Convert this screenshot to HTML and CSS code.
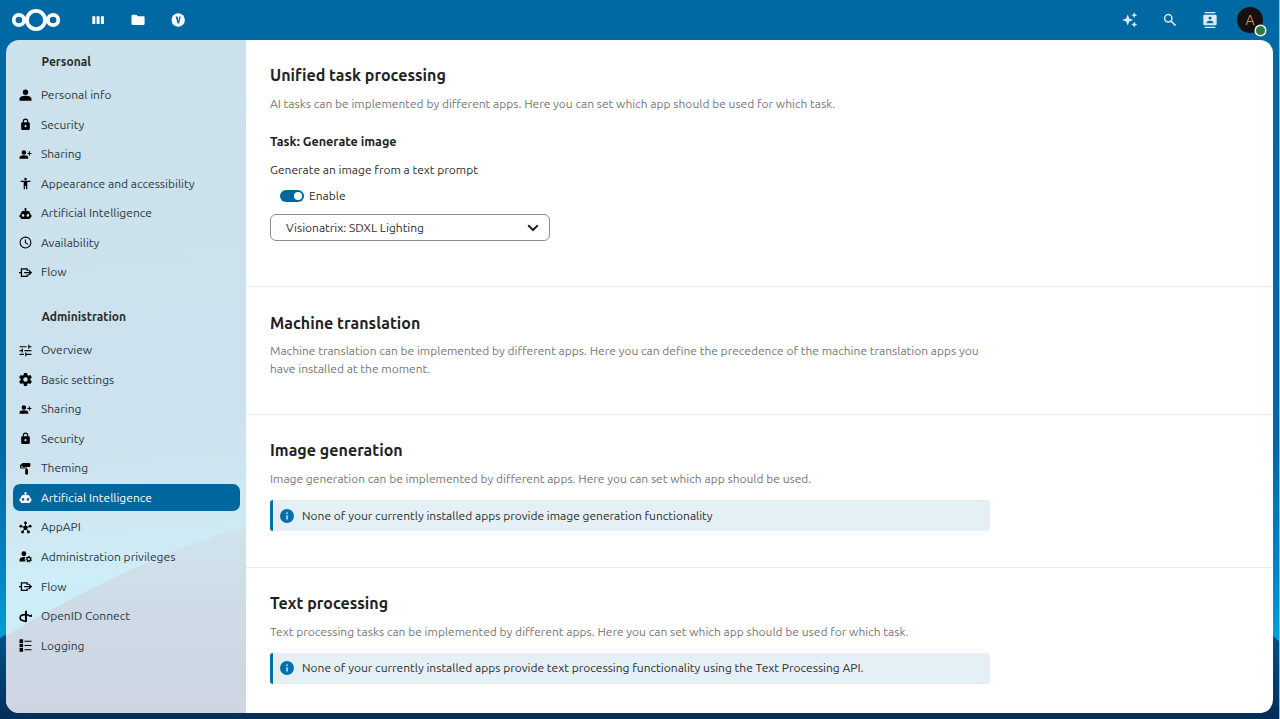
FILE: index.html
```html
<!DOCTYPE html>
<html lang="en">
<head>
<meta charset="utf-8">
<title>Artificial Intelligence - Administration settings</title>
<link rel="stylesheet" href="styles.css">
</head>
<body>
<svg class="defs" aria-hidden="true">
  <symbol id="i-user" viewBox="0 0 24 24"><path d="M12 1a5 5 0 0 1 0 10 5 5 0 0 1 0-10M12 12.500c6.500 0 11 2 11 5.500v3.500H1V18c0-3.500 4.500-5.500 11-5.500z"/></symbol>
  <symbol id="i-lock" viewBox="0 0 24 24"><path d="M12,17A2,2 0 0,0 14,15C14,13.89 13.1,13 12,13A2,2 0 0,0 10,15A2,2 0 0,0 12,17M18,8A2,2 0 0,1 20,10V20A2,2 0 0,1 18,22H6A2,2 0 0,1 4,20V10C4,8.89 4.9,8 6,8H7V6A5,5 0 0,1 12,1A5,5 0 0,1 17,6V8H18M12,3A3,3 0 0,0 9,6V8H15V6A3,3 0 0,0 12,3Z"/></symbol>
  <symbol id="i-share" viewBox="0 0 24 24"><path d="M9 4a4 4 0 0 1 0 8.500 4 4 0 0 1 0-8.500M9 13.500c5 0 8 1.500 8 4V20H1v-2.500c0-2.500 3-4 8-4zM18.200 6h2v3H23v2h-2.800v3h-2v-3h-2.800V9h2.800z"/></symbol>
  <symbol id="i-access" viewBox="0 0 24 24"><path d="M12 1.500a2.200 2.200 0 0 1 0 4.400A2.200 2.200 0 0 1 12 1.500M21 9.200h-5.700V22.500h-2.300v-6h-2v6H8.700V9.200H3V6.700h18z"/></symbol>
  <symbol id="i-robot" viewBox="0 0 24 24"><path d="M12,2A2,2 0 0,1 14,4C14,4.740 13.600,5.390 13,5.730V7H14A7,7 0 0,1 21,14H22A1,1 0 0,1 23,15V18A1,1 0 0,1 22,19H21V20A2,2 0 0,1 19,22H5A2,2 0 0,1 3,20V19H2A1,1 0 0,1 1,18V15A1,1 0 0,1 2,14H3A7,7 0 0,1 10,7H11V5.730C10.400,5.390 10,4.740 10,4A2,2 0 0,1 12,2M7.500,13A2.500,2.500 0 0,0 5,15.500A2.500,2.500 0 0,0 7.500,18A2.500,2.500 0 0,0 10,15.500A2.500,2.500 0 0,0 7.500,13M16.500,13A2.500,2.500 0 0,0 14,15.500A2.500,2.500 0 0,0 16.500,18A2.500,2.500 0 0,0 19,15.500A2.500,2.500 0 0,0 16.500,13Z"/></symbol>
  <symbol id="i-clock" viewBox="0 0 24 24"><path fill="none" stroke="currentColor" stroke-width="2" d="M12 2a10 10 0 0 1 0 20 10 10 0 0 1 0-20M11.800 6.500v6l5 3"/></symbol>
  <symbol id="i-flow" viewBox="0 0 24 24"><path fill="none" stroke="currentColor" stroke-width="2.400" d="M15 9V5.200H4.500v14H15V15.500M0 12.200h4M9.500 12.200h11M17.500 7.200l5 5-5 5"/></symbol>
  <symbol id="i-tune" viewBox="0 0 24 24"><path d="M1 4h13v2.200H1zM17 1.500h2.200V4H23v2.200h-3.800v2.500H17zM1 11h4V8.500h2.200v7.200H5v-2.500H1zM10 11h13v2.200H10zM1 18h8v2.200H1zM11.500 15.500h2.200V18H23v2.200h-9.300v2.600h-2.200z"/></symbol>
  <symbol id="i-cog" viewBox="2 2 20 20"><path d="M12,15.500A3.500,3.500 0 0,1 8.500,12A3.500,3.500 0 0,1 12,8.500A3.500,3.500 0 0,1 15.500,12A3.500,3.500 0 0,1 12,15.500M19.430,12.970C19.470,12.650 19.500,12.330 19.500,12C19.500,11.670 19.470,11.340 19.430,11L21.540,9.370C21.730,9.220 21.780,8.950 21.660,8.730L19.660,5.270C19.540,5.050 19.270,4.960 19.050,5.050L16.560,6.050C16.040,5.660 15.500,5.320 14.870,5.070L14.500,2.420C14.460,2.180 14.250,2 14,2H10C9.750,2 9.540,2.180 9.500,2.420L9.130,5.070C8.500,5.320 7.960,5.660 7.440,6.050L4.950,5.050C4.730,4.960 4.460,5.050 4.340,5.270L2.340,8.730C2.210,8.950 2.270,9.220 2.460,9.370L4.570,11C4.530,11.340 4.500,11.670 4.500,12C4.500,12.330 4.530,12.650 4.570,12.970L2.460,14.630C2.270,14.780 2.210,15.050 2.340,15.270L4.340,18.730C4.460,18.950 4.730,19.030 4.950,18.950L7.440,17.940C7.960,18.340 8.500,18.680 9.130,18.930L9.500,21.580C9.540,21.820 9.750,22 10,22H14C14.250,22 14.460,21.820 14.500,21.580L14.870,18.930C15.500,18.670 16.040,18.340 16.560,17.940L19.050,18.950C19.270,19.030 19.540,18.950 19.660,18.730L21.660,15.270C21.780,15.050 21.730,14.780 21.540,14.630L19.430,12.970Z"/></symbol>
  <symbol id="i-theme" viewBox="0 0 24 24"><path d="M7 2h12a2 2 0 0 1 2 2v3a2 2 0 0 1-2 2H7a2 2 0 0 1-2-2H4v3h9a2 2 0 0 1 2 2v1.500h1.500V23h-5v-9.500H13V12H4a2 2 0 0 1-2-2V6a2 2 0 0 1 2-2h1a2 2 0 0 1 2-2z"/></symbol>
  <symbol id="i-hub" viewBox="0 0 24 24"><path fill="none" stroke="currentColor" stroke-width="1.800" d="M12 4v8M3 9.500l9 3 9-3M6.500 20l5.500-7 5.500 7"/><circle cx="12" cy="12.500" r="4"/><circle cx="12" cy="3.500" r="2.600"/><circle cx="3.400" cy="9.500" r="2.600"/><circle cx="20.600" cy="9.500" r="2.600"/><circle cx="6.500" cy="20.200" r="2.700"/><circle cx="17.500" cy="20.200" r="2.700"/></symbol>
  <symbol id="i-admin" viewBox="0 0 24 24"><path d="M9 2.500a4.500 4.500 0 0 1 0 9 4.500 4.500 0 0 1 0-9M1 21v-3c0-3 4-5 8-5l3 .300c-2 2-2 5 0 7.700z"/><circle cx="18" cy="17" r="3.300" fill="none" stroke="currentColor" stroke-width="2.400"/><path fill="none" stroke="currentColor" stroke-width="2" stroke-dasharray="2 2.200" d="M18 12a5 5 0 0 1 0 10 5 5 0 0 1 0-10"/></symbol>
  <symbol id="i-openid" viewBox="0 0 24 24"><path fill="none" stroke="currentColor" stroke-width="3" d="M12 8.500C5.500 8.500 2 11 2 14.500S6 20.500 12.500 20.800M12.500 8.500c4 0 6 1 8.500 3"/><path d="M11 2l3.800-1v20.500L11 23zM24 8v5l-6.500-1.500z"/></symbol>
  <symbol id="i-log" viewBox="0 0 24 24"><path d="M1 .5h6.500v6.800H1zM1 8.600h6.500v6.800H1zM1 16.700h6.500v6.800H1zM10 3.200h13V5H10zM10 11h13v1.800H10zM10 18.800h13v1.800H10z"/></symbol>
  <symbol id="i-info" viewBox="2 2 20 20"><path d="M13,9H11V7H13M13,17H11V11H13M12,2A10,10 0 0,0 2,12A10,10 0 0,0 12,22A10,10 0 0,0 22,12A10,10 0 0,0 12,2Z"/></symbol>
</svg>

<svg class="wallpaper" viewBox="0 0 1280 719" aria-hidden="true">
  <defs>
    <linearGradient id="sky" x1="0" y1="0" x2="0" y2="1"><stop offset="0" stop-color="#0068a3"/><stop offset=".62" stop-color="#0068a5"/><stop offset=".78" stop-color="#0082c5"/><stop offset=".9" stop-color="#00a2dc"/></linearGradient>
    <linearGradient id="hill" x1="0" y1="630" x2="0" y2="719" gradientUnits="userSpaceOnUse"><stop offset="0" stop-color="#005586"/><stop offset=".8" stop-color="#033563"/><stop offset="1" stop-color="#022c59"/></linearGradient>
  </defs>
  <rect width="1280" height="719" fill="url(#sky)"/>
  <path d="M0 638 Q130 555 260 522 L1100 522 Q1220 590 1280 642V719H0z" fill="url(#hill)"/>
  <rect x="1279" width="1" height="719" fill="#8cc0dc"/>
</svg>

<header class="topbar">
  <svg class="logo" viewBox="0 0 50 24"><g fill="none" stroke="#fff"><circle cx="25" cy="12" r="9.100" stroke-width="3.800"/><circle cx="7.900" cy="12" r="5.200" stroke-width="3.800"/><circle cx="42.100" cy="12" r="5.200" stroke-width="3.800"/></g></svg>
  <nav class="apps">
    <svg viewBox="0 0 14 14"><path d="M1.300 3.200h3v7.800h-3zM5.600 3.200h3v7.800h-3zM9.900 3.200h3v7.800h-3z"/></svg>
    <svg viewBox="0 0 14 14"><path d="M1.500 1.800h3.900l1.400 1.400h5.800q1 0 1 1v6.500q0 1.200-1.200 1.200H1.700q-1.200 0-1.200-1.200V3q0-1.200 1-1.200z"/></svg>
    <svg viewBox="0 0 14 14"><circle cx="7.200" cy="7" r="6.700"/><path d="M4.600 3.600h2l1 4.500.7-4.500h1.500L8.100 10.600H6.600z" fill="#0068a3"/></svg>
  </nav>
  <div class="tools">
    <svg viewBox="0 0 16 16"><path d="M5.700 2.500l1.600 3.900L11.200 8 7.300 9.600 5.700 13.500 4.100 9.600.2 8l3.900-1.600zM12.300 .300l.9 2 2 .9-2 .9-.9 2-.9-2-2-.9 2-.9zM12.300 9.600l.9 2 2 .9-2 .9-.9 2-.9-2-2-.9 2-.9z"/></svg>
    <svg viewBox="0 0 16 16"><g fill="none" stroke="currentColor" stroke-width="1.500"><circle cx="6.300" cy="6.300" r="3.700"/><path d="M9 9l4.600 4.600"/></g></svg>
    <svg viewBox="0 0 24 24"><path d="M20,0H4V2H20V0M4,24H20V22H4V24M20,4H4A2,2 0 0,0 2,6V18A2,2 0 0,0 4,20H20A2,2 0 0,0 22,18V6A2,2 0 0,0 20,4M12,6.750A2.250,2.250 0 0,1 14.250,9A2.250,2.250 0 0,1 12,11.250A2.250,2.250 0 0,1 9.750,9A2.250,2.250 0 0,1 12,6.750M17,17H7V15.500C7,13.830 10.330,13 12,13C13.670,13 17,13.830 17,15.500V17Z"/></svg>
    <div class="avatar">A<span class="status"></span></div>
  </div>
</header>

<div class="panel">
  <aside class="sidebar">
    <svg class="sidebar-bg" viewBox="0 0 240 673" preserveAspectRatio="none" aria-hidden="true">
      <defs>
        <linearGradient id="s1" x1="0" y1="0" x2="0.030" y2="1"><stop offset="0" stop-color="#cbe1eb"/><stop offset=".6" stop-color="#cce2ee"/><stop offset=".72" stop-color="#cfe8f2"/><stop offset=".82" stop-color="#cdeef8"/></linearGradient>
        <linearGradient id="s2" x1="0" y1="0" x2="0" y2="1"><stop offset="0" stop-color="#cfe4ed"/><stop offset=".45" stop-color="#cedbe6"/><stop offset="1" stop-color="#cdd5e1"/></linearGradient>
      </defs>
      <rect width="240" height="673" fill="url(#s1)"/>
      <path d="M0 596Q120 523 240 486V673H0z" fill="url(#s2)"/>
    </svg>
    <h2 class="group">Personal</h2>
    <ul class="nav">
      <li><svg><use href="#i-user"/></svg><span>Personal info</span></li>
      <li><svg><use href="#i-lock"/></svg><span>Security</span></li>
      <li><svg><use href="#i-share"/></svg><span>Sharing</span></li>
      <li><svg><use href="#i-access"/></svg><span>Appearance and accessibility</span></li>
      <li><svg><use href="#i-robot"/></svg><span>Artificial Intelligence</span></li>
      <li><svg><use href="#i-clock"/></svg><span>Availability</span></li>
      <li><svg><use href="#i-flow"/></svg><span>Flow</span></li>
    </ul>
    <h2 class="group second">Administration</h2>
    <ul class="nav">
      <li><svg><use href="#i-tune"/></svg><span>Overview</span></li>
      <li><svg><use href="#i-cog"/></svg><span>Basic settings</span></li>
      <li><svg><use href="#i-share"/></svg><span>Sharing</span></li>
      <li><svg><use href="#i-lock"/></svg><span>Security</span></li>
      <li><svg><use href="#i-theme"/></svg><span>Theming</span></li>
      <li class="active"><svg><use href="#i-robot"/></svg><span>Artificial Intelligence</span></li>
      <li><svg><use href="#i-hub"/></svg><span>AppAPI</span></li>
      <li><svg><use href="#i-admin"/></svg><span>Administration privileges</span></li>
      <li><svg><use href="#i-flow"/></svg><span>Flow</span></li>
      <li><svg><use href="#i-openid"/></svg><span>OpenID Connect</span></li>
      <li><svg><use href="#i-log"/></svg><span>Logging</span></li>
    </ul>
  </aside>
  <main class="content">
    <section class="first">
      <h2>Unified task processing</h2>
      <p class="hint">AI tasks can be implemented by different apps. Here you can set which app should be used for which task.</p>
      <h3>Task: Generate image</h3>
      <p class="task-text">Generate an image from a text prompt</p>
      <div class="switch"><span class="track"></span><span>Enable</span></div>
      <div class="select"><span>Visionatrix: SDXL Lighting</span><svg viewBox="0 0 12 8"><path d="M1.200 1.200L6 6l4.800-4.800"/></svg></div>
    </section>
    <section class="second-section">
      <h2>Machine translation</h2>
      <p class="hint">Machine translation can be implemented by different apps. Here you can define the precedence of the machine translation apps you<br>have installed at the moment.</p>
    </section>
    <section class="third">
      <h2>Image generation</h2>
      <p class="hint">Image generation can be implemented by different apps. Here you can set which app should be used.</p>
      <div class="note"><svg><use href="#i-info"/></svg><span>None of your currently installed apps provide image generation functionality</span></div>
    </section>
    <section>
      <h2>Text processing</h2>
      <p class="hint">Text processing tasks can be implemented by different apps. Here you can set which app should be used for which task.</p>
      <div class="note"><svg><use href="#i-info"/></svg><span>None of your currently installed apps provide text processing functionality using the Text Processing API.</span></div>
    </section>
  </main>
</div>
</body>
</html>
```
FILE: styles.css
```css
* { box-sizing: border-box; }
body {
  margin: 0;
  width: 1280px;
  height: 719px;
  overflow: hidden;
  background: #0068a3;
  color: #2c2c2c;
  font: 12px/18px Ubuntu, "Noto Sans", sans-serif;
}
h2, h3, p, ul { margin: 0; padding: 0; }
svg { fill: currentColor; flex: none; }
.defs { position: absolute; width: 0; height: 0; }
.wallpaper { position: absolute; inset: 0; width: 1280px; height: 719px; z-index: -1; }

.topbar {
  height: 40px;
  padding: 0 17px 0 11px;
  display: flex;
  align-items: center;
  color: #fff;
}
.logo { width: 50px; height: 24px; }
.apps { display: flex; gap: 26px; margin-left: 30px; }
.apps svg { width: 14px; height: 14px; }
.tools { display: flex; align-items: center; gap: 24px; margin-left: auto; color: #d9ebf5; }
.tools svg { width: 16px; height: 16px; }
.avatar {
  position: relative;
  width: 26px;
  height: 26px;
  margin-left: -5px;
  border-radius: 50%;
  background: #15110e;
  color: #c99168;
  font-size: 14px;
  line-height: 26px;
  text-align: center;
}
.status {
  position: absolute;
  right: -3px;
  bottom: -3px;
  width: 11px;
  height: 11px;
  border-radius: 50%;
  background: #2d7b41;
  border: 1px solid #fff;
  box-shadow: 0 0 0 .5px #fff;
}

.panel {
  display: flex;
  width: 1267px;
  height: 672.500px;
  margin-left: 6px;
  border-radius: 13px;
  overflow: hidden;
}
.sidebar { position: relative; z-index: 0; width: 240px; padding: 12px 6px 0 6.500px; }
.sidebar-bg { position: absolute; inset: 0; width: 240px; height: 673px; z-index: -1; }
.group { padding-left: 29px; font-size: 12px; line-height: 20px; font-weight: 600; }
.group.second { margin-top: 21px; }
.nav { list-style: none; margin-top: 9.700px; display: grid; gap: 2.560px; }
.nav li {
  display: flex;
  align-items: center;
  height: 27px;
  padding-left: 6.400px;
  border-radius: 7px;
}
.nav svg { width: 13px; height: 13px; margin-right: 9px; color: #000; }
.nav span { color: #2a3640; }
.nav .active { background: #00679e; }
.nav .active svg, .nav .active span { color: #fff; }

.content { flex: 1; background: #fff; }
.content section { padding: 24px 24px 0; border-bottom: 1px solid #ededed; }
.content section:last-child { border: 0; }
.content h2 { font-size: 16px; line-height: 23px; font-weight: 600; letter-spacing: .02px; color: #222; }
.content h3 { margin-top: 19px; font-size: 12.600px; line-height: 18px; font-weight: 600; color: #222; }
.hint { margin-top: 8px; color: #767676; }
.content .first { height: 247px; }
.content .second-section { height: 128px; padding-top: 25px; }
.second-section .hint { margin-top: 7px; }
.content .third { height: 152.500px; }
.task-text { margin-top: 11px; }
.switch { display: flex; align-items: center; gap: 5px; height: 18px; margin: 8px 0 0 10px; }
.track {
  display: flex;
  justify-content: flex-end;
  align-items: center;
  width: 24px;
  height: 12px;
  padding-right: 2px;
  border-radius: 6px;
  background: #00679e;
}
.track::after { content: ""; width: 8px; height: 8px; border-radius: 50%; background: #fff; }
.select {
  display: flex;
  align-items: center;
  justify-content: space-between;
  width: 280px;
  height: 27px;
  margin-top: 9px;
  padding: 0 10px 0 15px;
  border: 1px solid #8c8c8c;
  border-radius: 6px;
}
.select svg { width: 12px; height: 8px; fill: none; stroke: #222; stroke-width: 2; }
.note {
  display: flex;
  align-items: center;
  width: 720px;
  height: 31px;
  margin-top: 12px;
  padding-left: 7px;
  border-left: 3px solid #0071ad;
  border-radius: 3px;
  background: #e5f0f6;
}
.note svg { width: 14px; height: 14px; margin-right: 8px; color: #0071ad; }
```
